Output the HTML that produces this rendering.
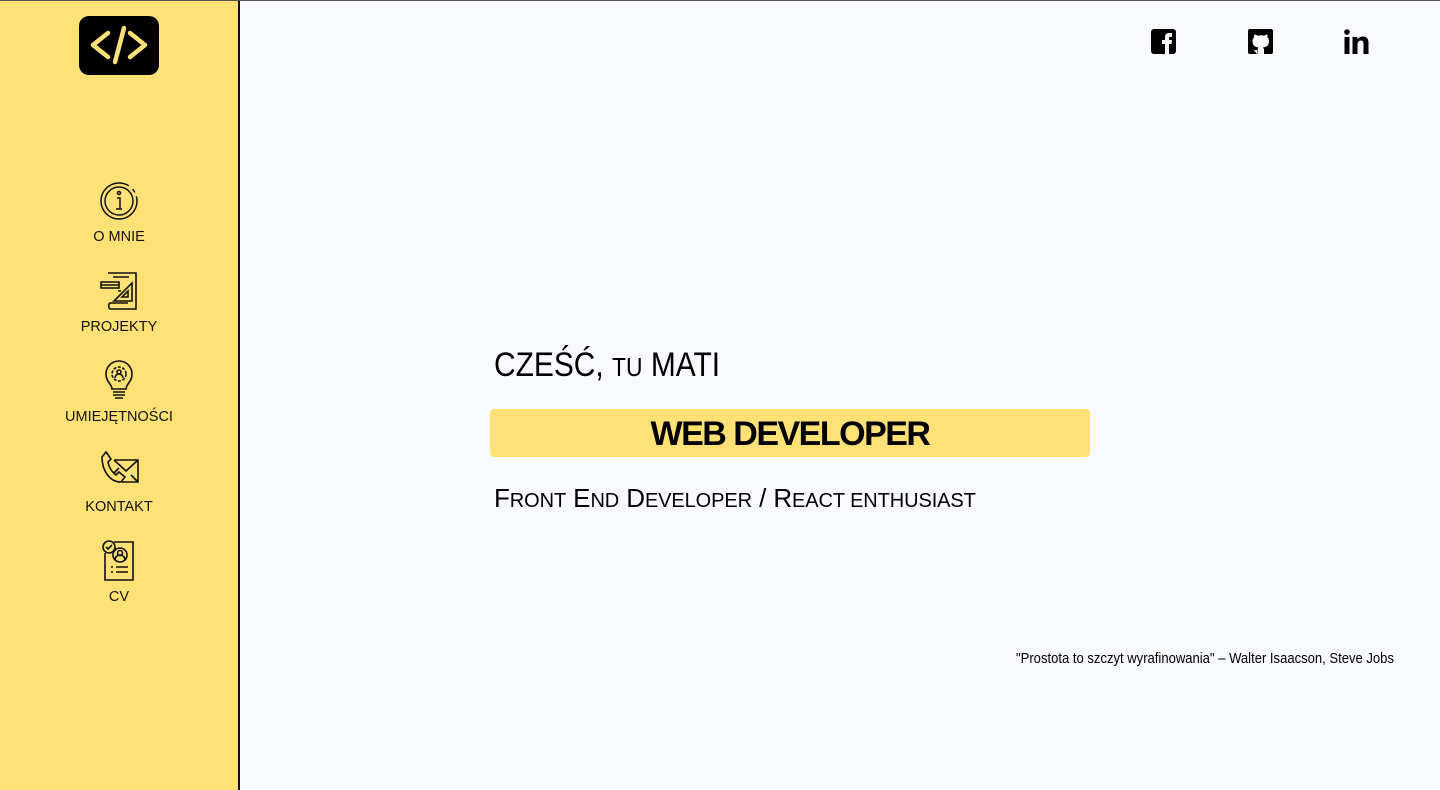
<!DOCTYPE html>
<html><head><meta charset="utf-8"><style>
*{margin:0;padding:0;box-sizing:border-box}
body{width:1440px;height:790px;overflow:hidden;background:#f8faff;font-family:"Liberation Sans","DejaVu Sans",sans-serif;position:relative}
.topline{position:absolute;left:0;top:0;width:1440px;height:1px;background:#555;z-index:2}
.side{position:absolute;left:0;top:0;width:240px;height:790px;background:#ffe176;border-right:2px solid #111}
.logo{position:absolute;left:79px;top:16px;width:80px;height:59px;background:#000;border-radius:10px}
.nav{position:absolute;left:0;width:238px;text-align:center;font-size:14.5px;color:#111}
.nav svg{display:block;margin:0 auto 8px}
.t{position:absolute;color:#000;white-space:nowrap}
.abs{position:absolute}
</style></head><body>
<div class="topline"></div>
<div class="side">
<div class="logo"><svg width="80" height="59" viewBox="0 0 80 59"><g fill="none" stroke="#ffe176" stroke-width="4.5" stroke-linecap="round" stroke-linejoin="round"><path d="M29 17 L14 29 L29 41"/><path d="M51 17 L66 29 L51 41"/><path d="M45 12 L36 46"/></g></svg></div>
<div class="nav" style="top:181px"><svg width="40" height="40" viewBox="0 0 40 40" fill="none" stroke="#111" stroke-width="1.5"><circle cx="20" cy="20" r="18" stroke-dasharray="95 5 4 4"/><circle cx="20" cy="20" r="14"/><circle cx="20" cy="12" r="1.5"/><path d="M18 17h3v11h2M17 28h6"/></svg>O MNIE</div>
<div class="nav" style="top:269px"><svg width="42" height="42" viewBox="0 0 42 42" fill="none" stroke="#111" stroke-width="1.6"><path d="M10 4h28v36H12a4 4 0 0 1 0-6H30"/><path d="M3 13h18v6H3zM3 16h18"/><path d="M16 32L34 14v18z"/><path d="M24 28l6-6v6z"/><path d="M15 8h16M20 22h3"/></svg>PROJEKTY</div>
<div class="nav" style="top:359px"><svg width="40" height="42" viewBox="0 0 40 42" fill="none" stroke="#111" stroke-width="1.6"><path d="M13 30c0-5-6-7-6-15a13 13 0 0 1 26 0c0 8-6 10-6 15z"/><path d="M14 33h12M14 36h12M16 39h8"/><circle cx="20" cy="15" r="7" stroke-dasharray="3 1.5"/><circle cx="20" cy="13" r="2"/><path d="M16 19a4 4 0 0 1 8 0"/></svg>UMIEJĘTNOŚCI</div>
<div class="nav" style="top:449px"><svg width="42" height="42" viewBox="0 0 42 42" fill="none" stroke="#111" stroke-width="1.6"><path d="M8 3l5 7-3 3c1 6 4 10 8 13l3-3 6 5-4 5C12 33 4 22 4 8z"/><path d="M16 11h24v22H24M16 11l12 11 12-11M16 24l5-5M40 33l-7-7"/></svg>KONTAKT</div>
<div class="nav" style="top:539px"><svg width="40" height="42" viewBox="0 0 40 42" fill="none" stroke="#111" stroke-width="1.6"><path d="M15 3h19v38H6V14"/><circle cx="10" cy="8" r="6"/><path d="M7 8l2 2 4-4"/><circle cx="21" cy="16" r="7"/><circle cx="21" cy="14" r="2.5"/><path d="M16 21a5 5 0 0 1 10 0"/><path d="M12 28h2M17 28h12M12 33h2M17 33h12"/></svg>CV</div>
</div>
<svg class="abs" style="left:1151px;top:29px" width="25" height="25" viewBox="0 0 25 25"><rect width="25" height="25" rx="3" fill="#000"/><path d="M14 25V15h-3v-4h3V8c0-3 2-4 4-4h3v4h-2c-1 0-1 .5-1 1v2h3l-.5 4H18v10z" fill="#f8faff"/></svg>
<svg class="abs" style="left:1248px;top:29px" width="25" height="25" viewBox="0 0 25 25"><rect width="25" height="25" rx="2" fill="#000"/><path d="M9 25v-4c-3 1-4-1-5-2M16 25v-4c0-1-.5-2-1-2.5 3-.5 6-1.5 6-6.5 0-1.5-.5-2.5-1.5-3.5.2-.8.2-2-.2-3-1 0-2 .5-3 1.2a11 11 0 0 0-6 0C8.300 6 7.300 5.500 6.300 5.500c-.4 1-.4 2.200-.2 3C5 9.500 4.500 10.500 4.500 12c0 5 3 6 6 6.500-.5.5-1 1.500-1 2.500v4z" fill="#f8faff"/></svg>
<svg class="abs" style="left:1344px;top:29px" width="25" height="25" viewBox="0 0 25 25" fill="#000"><circle cx="3" cy="3" r="2.8"/><rect x="0.5" y="8" width="5" height="17"/><path d="M8.5 8h5v2.500c1-1.800 3-3 5.500-3 4 0 5.500 2.500 5.500 6.500V25h-5V15c0-2-.5-3.500-2.500-3.500s-3.500 1.500-3.500 4V25h-5z"/></svg>
<div class="t" style="left:494px;top:346px;font-size:34px;transform:scaleX(0.88);transform-origin:left">CZEŚĆ, <span style="font-size:26px">TU</span> MATI</div>
<div class="abs" style="left:490px;top:409px;width:600px;height:48px;background:#ffe176;border-radius:4px;text-align:center;font-size:34px;font-weight:bold;line-height:50px;letter-spacing:-1.5px">WEB DEVELOPER</div>
<div class="t" style="left:494px;top:483px;font-size:26px;letter-spacing:-0.1px">F<span style="font-size:20px">RONT</span> E<span style="font-size:20px">ND</span> D<span style="font-size:20px">EVELOPER</span> / R<span style="font-size:20px">EACT ENTHUSIAST</span></div>
<div class="t" style="left:1016px;top:650px;font-size:15px;transform:scaleX(0.87);transform-origin:left">"Prostota to szczyt wyrafinowania" – Walter Isaacson, Steve Jobs</div>
</body></html>
